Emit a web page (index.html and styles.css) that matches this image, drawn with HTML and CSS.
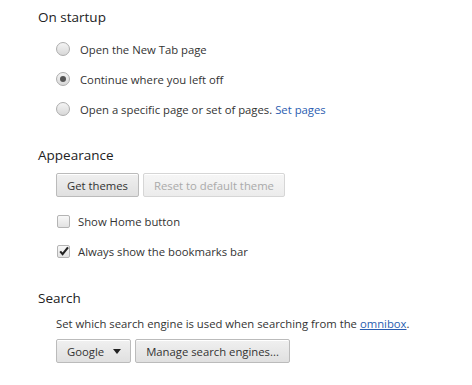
FILE: index.html
```html
<!DOCTYPE html>
<html lang="en">
<head>
  <meta charset="UTF-8">
  <title>Settings</title>
  <link rel="stylesheet" href="styles.css">
</head>
<body>
<div class="settings">
  <section class="group startup">
    <h3>On startup</h3>
    <div class="body">
      <label class="row radio-row"><span class="radio"></span>Open the New Tab page</label>
      <label class="row radio-row"><span class="radio checked"></span>Continue where you left off</label>
      <label class="row radio-row"><span class="radio"></span>Open a specific page or set of pages.&nbsp;<a href="#" class="link">Set pages</a></label>
    </div>
  </section>

  <section class="group appearance">
    <h3>Appearance</h3>
    <div class="body">
      <div class="buttons">
        <button class="btn">Get themes</button>
        <button class="btn" disabled>Reset to default theme</button>
      </div>
      <label class="row check-row"><span class="check"></span>Show Home button</label>
      <label class="row check-row"><span class="check checked">
        <svg width="12" height="12" viewBox="0 0 12 12"><path d="M2.2 6.4 L4.6 9.2 L10 2.4" fill="none" stroke="#222" stroke-width="2.1" stroke-linejoin="miter"/></svg>
      </span>Always show the bookmarks bar</label>
    </div>
  </section>

  <section class="group search">
    <h3>Search</h3>
    <div class="body">
      <p class="desc">Set which search engine is used when searching from the <a href="#" class="link underline">omnibox</a>.</p>
      <div class="buttons">
        <button class="btn select">Google <span class="arrow"></span></button>
        <button class="btn">Manage search engines...</button>
      </div>
    </div>
  </section>
</div>
</body>
</html>
```

FILE: styles.css
```css
* { box-sizing: border-box; }
body {
  margin: 0;
  background: #fff;
  font-family: 'Open Sans', 'Noto Sans', sans-serif;
  font-size: 11.3px;
  color: #333;
}
.settings {
  padding: 7px 0 0 38px;
}
h3 {
  margin: 0;
  font-size: 13.5px;
  font-weight: normal;
  line-height: 20px;
  color: #222;
}
.body {
  padding-left: 18px;
}
.startup .body { margin-top: 7px; }
.appearance { margin-top: 21px; }
.appearance .buttons { margin-top: 8px; margin-bottom: 9px; }
.search { margin-top: 22px; }

.row {
  display: flex;
  align-items: center;
  height: 30px;
  cursor: default;
}
.radio {
  width: 14px;
  height: 14px;
  border-radius: 50%;
  border: 1px solid #adadad;
  background: linear-gradient(#f4f4f4, #d8d8d8);
  margin-right: 10px;
  position: relative;
  flex: none;
}
.radio.checked::after {
  content: "";
  position: absolute;
  left: 3px; top: 3px;
  width: 6px; height: 6px;
  border-radius: 50%;
  background: #555;
}
.check {
  width: 13px;
  height: 13px;
  border: 1px solid #b4b4b4;
  border-radius: 2px;
  background: linear-gradient(#f8f8f8, #e2e2e2);
  margin: 0 8px 0 1px;
  position: relative;
  flex: none;
}
.check svg {
  position: absolute;
  left: 0; top: -1px;
}
.link {
  color: #2a5db0;
  text-decoration: none;
}
.link.underline { text-decoration: underline; }

.buttons {
  display: flex;
  gap: 4px;
}
.btn {
  font-family: inherit;
  font-size: 11.3px;
  color: #333;
  height: 24px;
  padding: 0 10px;
  border: 1px solid #bbb;
  border-radius: 2px;
  background: linear-gradient(#f0f0f0, #e0e0e0);
  box-shadow: inset 0 1px 0 #fff;
}
.btn:disabled {
  color: #aaa;
  border-color: #d6d6d6;
  background: linear-gradient(#f6f6f6, #ececec);
}
.btn.select {
  display: flex;
  align-items: center;
  padding: 0 9px 0 10px;
  gap: 9px;
}
.arrow {
  width: 0; height: 0;
  border-left: 4px solid transparent;
  border-right: 4px solid transparent;
  border-top: 5px solid #222;
}
.desc {
  margin: 8px 0 7px;
  line-height: 16px;
}
```
